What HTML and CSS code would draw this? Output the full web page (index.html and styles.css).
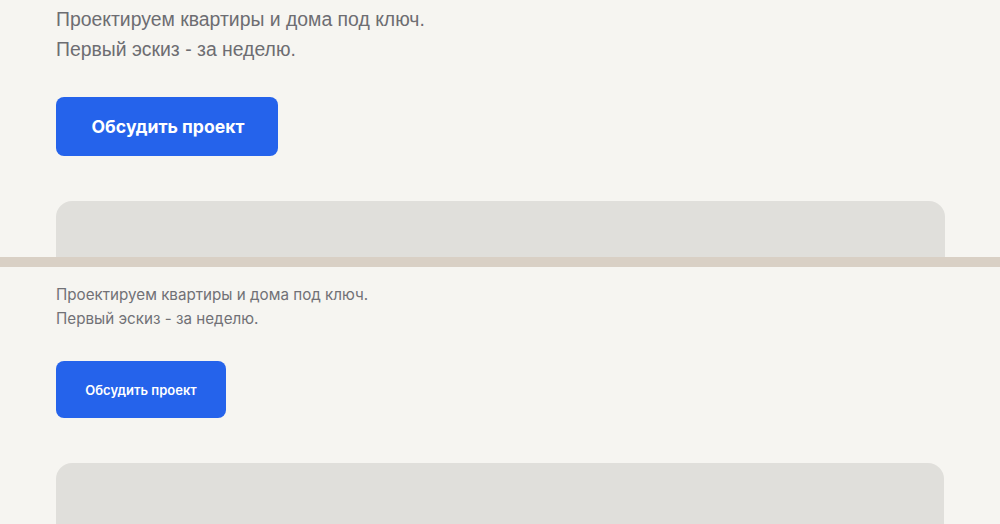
FILE: index.html
```html
<!DOCTYPE html>
<html lang="ru">
<head>
<meta charset="utf-8">
<link rel="stylesheet" href="styles.css">
</head>
<body>
  <section class="shot shot-a">
    <div class="hero">
      <p class="lead">Проектируем квартиры и дома под ключ.<br>Первый эскиз - за неделю.</p>
      <a class="btn" href="#">Обсудить проект</a>
      <div class="card"></div>
    </div>
  </section>
  <div class="divider"></div>
  <section class="shot shot-b">
    <div class="hero">
      <p class="lead">Проектируем квартиры и дома под ключ.<br>Первый эскиз - за неделю.</p>
      <a class="btn" href="#">Обсудить проект</a>
      <div class="card"></div>
    </div>
  </section>
</body>
</html>
```

FILE: styles.css
```css
* { box-sizing: border-box; }
html, body {
  margin: 0;
  padding: 0;
  background: #f6f5f1;
}
body {
  width: 1000px;
  height: 524px;
  overflow: hidden;
}
.shot {
  overflow: hidden;
  background: #f6f5f1;
}
.hero {
  display: flex;
  flex-direction: column;
  align-items: flex-start;
  padding: 0 55px 0 56px;
}
.lead { margin: 0; color: #6d6d72; }
.btn {
  display: inline-flex;
  align-items: center;
  justify-content: center;
  background: #2563eb;
  color: #fff;
  text-decoration: none;
  border-radius: 8px;
}
.card {
  align-self: stretch;
  background: #e0dfdb;
  border-radius: 16px;
}
.divider {
  height: 10px;
  background: #d9d0c5;
}

/* first screenshot */
.shot-a { height: 257px; }
.shot-a .hero { padding-top: 4px; }
.shot-a .lead {
  font-family: "Liberation Sans", Arial, sans-serif;
  font-size: 19.4px;
  line-height: 30px;
}
.shot-a .btn {
  margin-top: 33px;
  width: 222px;
  height: 59px;
  padding-left: 2px;
  font-family: Inter, "Liberation Sans", sans-serif;
  font-weight: 700;
  font-size: 17.6px;
}
.shot-a .card {
  margin-top: 45px;
  height: 200px;
}

/* second screenshot */
.shot-b { height: 257px; }
.shot-b .hero { padding-top: 16px; padding-right: 56px; }
.shot-b .lead {
  font-family: Inter, "Liberation Sans", sans-serif;
  font-size: 15.2px;
  line-height: 24px;
  color: #717176;
}
.shot-b .btn {
  margin-top: 30px;
  width: 170px;
  height: 57px;
  font-family: Inter, "Liberation Sans", sans-serif;
  font-weight: 600;
  font-size: 13px;
}
.shot-b .card {
  margin-top: 45px;
  height: 200px;
}
```
